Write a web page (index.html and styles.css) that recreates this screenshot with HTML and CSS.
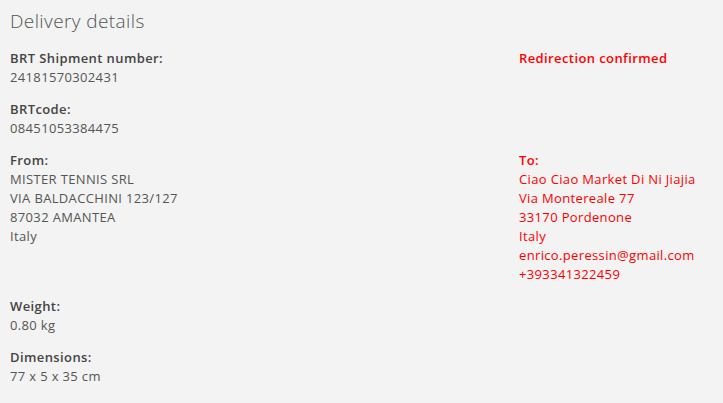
FILE: index.html
```html
<!DOCTYPE html>
<html>
<head>
<meta charset="utf-8">
<link rel="stylesheet" href="styles.css">
</head>
<body>
<div class="panel">
  <h2 class="title">Delivery details</h2>
  <div class="grid">
    <div class="cell">
      <div class="label">BRT Shipment number:</div>
      <div class="value">24181570302431</div>
    </div>
    <div class="cell red">
      <div class="label">Redirection confirmed</div>
    </div>
    <div class="cell">
      <div class="label">BRTcode:</div>
      <div class="value">08451053384475</div>
    </div>
    <div class="cell"></div>
    <div class="cell">
      <div class="label">From:</div>
      <div class="value">MISTER TENNIS SRL</div>
      <div class="value">VIA BALDACCHINI 123/127</div>
      <div class="value">87032 AMANTEA</div>
      <div class="value">Italy</div>
    </div>
    <div class="cell red">
      <div class="label">To:</div>
      <div class="value">Ciao Ciao Market Di Ni Jiajia</div>
      <div class="value">Via Montereale 77</div>
      <div class="value">33170 Pordenone</div>
      <div class="value">Italy</div>
      <div class="value">enrico.peressin@gmail.com</div>
      <div class="value">+393341322459</div>
    </div>
    <div class="cell">
      <div class="label">Weight:</div>
      <div class="value">0.80 kg</div>
    </div>
    <div class="cell"></div>
    <div class="cell">
      <div class="label">Dimensions:</div>
      <div class="value">77 x 5 x 35 cm</div>
    </div>
    <div class="cell"></div>
  </div>
</div>
</body>
</html>
```
FILE: styles.css
```css
html, body {
  margin: 0;
  padding: 0;
  background: #f2f3f2;
}
body {
  font-family: "Open Sans", "Liberation Sans", sans-serif;
  color: #555;
}
.panel {
  padding: 9px 10px 10px 10px;
}
.title {
  margin: 0 0 16px 0;
  font-size: 19px;
  line-height: 24px;
  font-weight: 300;
  letter-spacing: 0.4px;
  color: #555;
}
.grid {
  display: grid;
  grid-template-columns: 509px 1fr;
  row-gap: 13px;
}
.label {
  font-size: 13px;
  line-height: 19px;
  font-weight: 600;
  letter-spacing: 0.4px;
  color: #444;
}
.value {
  font-size: 13px;
  line-height: 19px;
  font-weight: 400;
  letter-spacing: 0.35px;
  color: #555;
}
.red .label,
.red .value {
  color: #f00;
}
```
